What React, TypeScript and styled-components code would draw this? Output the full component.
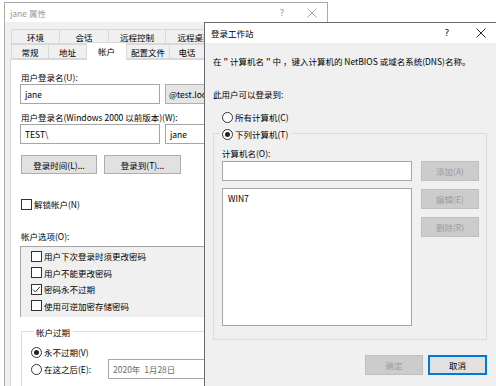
import React from "react";
import styled, { createGlobalStyle } from "styled-components";

const Global = createGlobalStyle`
  html, body { margin: 0; padding: 0; background: #fff; }
  body {
    font-family: "Noto Sans CJK SC", "Noto Sans", sans-serif;
    font-size: 8.5px;
    color: #000;
  }
  * { box-sizing: border-box; }
`;

const Desktop = styled.div`
  position: relative;
  width: 496px;
  height: 386px;
  overflow: hidden;
  background: #fff;
`;

const BackWindow = styled.div`
  position: absolute;
  z-index: 0;
  left: 4px;
  top: 2px;
  width: 324px;
  height: 420px;
  border: 1px solid #aaaaaa;
  background: #f0f0f0;
  display: flex;
  flex-direction: column;
`;

const FrontWindow = styled.div`
  position: absolute;
  z-index: 1;
  left: 204px;
  top: 22px;
  width: 294px;
  height: 380px;
  border: 1px solid #6b6b6b;
  background: #f0f0f0;
  display: flex;
  flex-direction: column;
`;

const TitleBar = styled.div<{ $inactive?: boolean; $pad: number }>`
  height: ${(p) => (p.$inactive ? 19 : 20)}px;
  flex: none;
  background: #fff;
  display: flex;
  align-items: center;
  padding-left: ${(p) => p.$pad}px;
  color: ${(p) => (p.$inactive ? "#9a9a9a" : "#000")};
  line-height: 12px;
`;

const TitleText = styled.span`
  font-size: 8.5px;
`;

const Controls = styled.div`
  margin-left: auto;
  display: flex;
  height: 100%;
`;

const CtrlBtn = styled.div<{ $w: number; $color: string }>`
  width: ${(p) => p.$w}px;
  height: 100%;
  display: flex;
  align-items: center;
  justify-content: center;
  font-family: "DejaVu Sans", sans-serif;
  font-size: 9px;
  color: ${(p) => p.$color};
`;

const CloseGlyph = ({ color }: { color: string }) => (
  <svg width="10" height="10" viewBox="0 0 10 10">
    <path d="M0.5 0.5 L9.5 9.5 M9.5 0.5 L0.5 9.5" stroke={color} strokeWidth="0.9" fill="none" />
  </svg>
);

const BackBody = styled.div`
  flex: 1;
  display: flex;
  flex-direction: column;
  padding: 7px 0 0 5px;
`;

const TabStrip = styled.div`
  display: flex;
  flex-direction: column;
  margin-left: 1px;
`;

const TabRow = styled.div`
  display: flex;
  height: 15px;
  align-items: flex-end;
`;

const Tab = styled.div<{ $w: number; $selected?: boolean }>`
  width: ${(p) => p.$w}px;
  flex: none;
  height: ${(p) => (p.$selected ? 18 : 15)}px;
  margin-bottom: ${(p) => (p.$selected ? -1 : 0)}px;
  border: 1px solid #d9d9d9;
  border-bottom: ${(p) => (p.$selected ? "none" : "1px solid #d9d9d9")};
  margin-left: -1px;
  background: ${(p) => (p.$selected ? "#fff" : "#f0f0f0")};
  position: relative;
  z-index: ${(p) => (p.$selected ? 2 : 0)};
  display: flex;
  align-items: ${(p) => (p.$selected ? "flex-start" : "center")};
  padding-top: ${(p) => (p.$selected ? 2 : 0)}px;
  justify-content: center;
  white-space: nowrap;
  overflow: hidden;
  line-height: 12px;
  &:first-child { margin-left: 0; }
`;

const Panel = styled.div`
  flex: 1;
  background: #fff;
  border: 1px solid #d9d9d9;
  margin-right: 5px;
  padding-left: 9px;
  display: flex;
  flex-direction: column;
  position: relative;
  z-index: 1;
`;

const Label = styled.div<{ $mt: number }>`
  margin-top: ${(p) => p.$mt}px;
  margin-left: 1px;
  line-height: 12px;
  white-space: nowrap;
`;

const FieldRow = styled.div`
  margin-top: 1px;
  display: flex;
  gap: 5px;
  height: 20px;
`;

const TextBox = styled.div<{ $w?: number; $muted?: boolean }>`
  width: ${(p) => (p.$w ? `${p.$w}px` : "auto")};
  flex: ${(p) => (p.$w ? "none" : 1)};
  height: 20px;
  border: 1px solid #a6a6a6;
  background: #fff;
  padding-left: 4px;
  display: flex;
  align-items: center;
  color: ${(p) => (p.$muted ? "#6d6d6d" : "#000")};
  white-space: nowrap;
  overflow: hidden;
`;

const Combo = styled.div`
  flex: 1;
  height: 20px;
  border: 1px solid #adadad;
  background: #e5e5e5;
  padding-left: 3px;
  display: flex;
  align-items: center;
  white-space: nowrap;
  overflow: hidden;
`;

const ButtonRow = styled.div`
  margin-top: 11px;
  margin-left: 1px;
  display: flex;
  gap: 7px;
`;

const Button = styled.div<{ $w: number; $h?: number; $disabled?: boolean; $default?: boolean }>`
  width: ${(p) => p.$w}px;
  height: ${(p) => p.$h ?? 19}px;
  flex: none;
  border: 1px solid
    ${(p) => (p.$default ? "#0078d7" : p.$disabled ? "#bfbfbf" : "#adadad")};
  box-shadow: ${(p) => (p.$default ? "inset 0 0 0 1px #0078d7" : "none")};
  background: ${(p) => (p.$disabled ? "#cccccc" : "#e1e1e1")};
  color: ${(p) => (p.$disabled ? "#9c9c9c" : "#000")};
  display: flex;
  align-items: center;
  justify-content: center;
  white-space: nowrap;
  line-height: 12px;
`;

const CheckRow = styled.div<{ $mt?: number; $pl?: number; $h?: number; $ml?: number }>`
  margin-top: ${(p) => p.$mt ?? 0}px;
  margin-left: ${(p) => p.$ml ?? 1}px;
  padding-left: ${(p) => p.$pl ?? 0}px;
  height: ${(p) => p.$h ?? 14}px;
  display: flex;
  align-items: center;
  white-space: nowrap;
  flex: none;
`;

const Box = styled.div`
  width: 11px;
  height: 11px;
  border: 1px solid #333;
  background: #fff;
  flex: none;
  display: flex;
  align-items: center;
  justify-content: center;
  margin-right: 2px;
`;

const Circle = styled.div`
  width: 11px;
  height: 11px;
  border: 1px solid #333;
  border-radius: 50%;
  background: #fff;
  flex: none;
  display: flex;
  align-items: center;
  justify-content: center;
  margin-right: 2px;
`;

const Dot = styled.div`
  width: 5px;
  height: 5px;
  border-radius: 50%;
  background: #222;
`;

const CheckBox = ({ checked }: { checked?: boolean }) => (
  <Box>
    {checked && (
      <svg width="9" height="9" viewBox="0 0 9 9">
        <polyline points="1,4.6 3.4,7 8,1.8" fill="none" stroke="#333" strokeWidth="1" />
      </svg>
    )}
  </Box>
);

const Radio = ({ checked }: { checked?: boolean }) => <Circle>{checked && <Dot />}</Circle>;

const OptionList = styled.div`
  margin-top: 4px;
  height: 71px;
  overflow: hidden;
  border: 1px solid #a6a6a6;
  border-bottom: none;
  background: #f0f0f0;
  padding-top: 1px;
`;

const OptionItem = styled.div`
  height: 16.5px;
  padding-left: 10px;
  display: flex;
  align-items: center;
  white-space: nowrap;
`;

const Group = styled.div<{ $h: number; $pl: number; $mt: number; $ml?: number }>`
  margin-top: ${(p) => p.$mt}px;
  margin-left: ${(p) => p.$ml ?? 0}px;
  height: ${(p) => p.$h}px;
  border: 1px solid #dcdcdc;
  padding-left: ${(p) => p.$pl}px;
  display: flex;
  flex-direction: column;
  flex: none;
`;

const Caption = styled.div<{ $bg: string; $ml: number }>`
  align-self: flex-start;
  margin-top: -7px;
  margin-left: ${(p) => p.$ml}px;
  padding: 0 3px 0 2px;
  background: ${(p) => p.$bg};
  height: 14px;
  display: flex;
  align-items: center;
  line-height: 12px;
  white-space: nowrap;
`;

const RadioLabel = styled.span<{ $w?: number }>`
  display: inline-block;
  width: ${(p) => (p.$w ? `${p.$w}px` : "auto")};
  line-height: 12px;
`;

const DlgBody = styled.div`
  flex: 1;
  display: flex;
  flex-direction: column;
  padding: 0 10px 0 8px;
`;

const Text = styled.div<{ $mt: number; $ml?: number }>`
  margin-top: ${(p) => p.$mt}px;
  margin-left: ${(p) => p.$ml ?? 0}px;
  line-height: 12px;
  white-space: nowrap;
`;

const EditGrid = styled.div`
  margin-top: 2px;
  display: grid;
  grid-template-columns: 190px 58px;
  column-gap: 9px;
`;

const LeftCol = styled.div`
  display: flex;
  flex-direction: column;
`;

const RightCol = styled.div`
  display: flex;
  flex-direction: column;
  gap: 8px;
`;

const ListArea = styled.div`
  margin-top: 7px;
  height: 138px;
  border: 1px solid #a6a6a6;
  background: #fff;
  padding: 3px 0 0 5px;
  line-height: 12px;
`;

const Footer = styled.div`
  margin-top: 15px;
  display: flex;
  justify-content: flex-end;
  gap: 5px;
`;

export default function App() {
  return (
    <>
      <Global />
      <Desktop>
        <BackWindow>
          <TitleBar $inactive $pad={5}>
            <TitleText>jane 属性</TitleText>
            <Controls>
              <CtrlBtn $w={30} $color="#9a9a9a">?</CtrlBtn>
              <CtrlBtn $w={30} $color="#9a9a9a">
                <CloseGlyph color="#9a9a9a" />
              </CtrlBtn>
            </Controls>
          </TitleBar>
          <BackBody>
            <TabStrip>
              <TabRow>
                <Tab $w={49}>环境</Tab>
                <Tab $w={50}>会话</Tab>
                <Tab $w={58}>远程控制</Tab>
                <Tab $w={110}>远程桌面服务配置文件</Tab>
              </TabRow>
              <TabRow>
                <Tab $w={38}>常规</Tab>
                <Tab $w={39}>地址</Tab>
                <Tab $w={41} $selected>帐户</Tab>
                <Tab $w={44}>配置文件</Tab>
                <Tab $w={36}>电话</Tab>
                <Tab $w={50}>组织</Tab>
              </TabRow>
            </TabStrip>
            <Panel>
              <Label $mt={11}>用户登录名(U):</Label>
              <FieldRow>
                <TextBox $w={140}>jane</TextBox>
                <Combo>@test.local</Combo>
              </FieldRow>
              <Label $mt={7}>用户登录名(Windows 2000 以前版本)(W):</Label>
              <FieldRow>
                <TextBox $w={140}>TEST\</TextBox>
                <TextBox>jane</TextBox>
              </FieldRow>
              <ButtonRow>
                <Button $w={76}>登录时间(L)...</Button>
                <Button $w={77}>登录到(T)...</Button>
              </ButtonRow>
              <CheckRow $mt={23}>
                <CheckBox />
                解锁帐户(N)
              </CheckRow>
              <Label $mt={19}>帐户选项(O):</Label>
              <OptionList>
                <OptionItem>
                  <CheckBox />
                  用户下次登录时须更改密码
                </OptionItem>
                <OptionItem>
                  <CheckBox />
                  用户不能更改密码
                </OptionItem>
                <OptionItem>
                  <CheckBox checked />
                  密码永不过期
                </OptionItem>
                <OptionItem>
                  <CheckBox />
                  使用可逆加密存储密码
                </OptionItem>
                <OptionItem>
                  <CheckBox />
                  以大写模式存储密码
                </OptionItem>
              </OptionList>
              <Group $h={80} $pl={9} $mt={14} $ml={1}>
                <Caption $bg="#fff" $ml={3}>帐户过期</Caption>
                <CheckRow $mt={6} $ml={0}>
                  <Radio checked />
                  <RadioLabel>永不过期(V)</RadioLabel>
                </CheckRow>
                <CheckRow $h={20} $ml={0}>
                  <Radio />
                  <RadioLabel $w={64}>在这之后(E):</RadioLabel>
                  <TextBox $w={120} $muted>2020年&nbsp;&nbsp;1月28日</TextBox>
                </CheckRow>
              </Group>
            </Panel>
          </BackBody>
        </BackWindow>

        <FrontWindow>
          <TitleBar $pad={6}>
            <TitleText>登录工作站</TitleText>
            <Controls>
              <CtrlBtn $w={36} $color="#111">?</CtrlBtn>
              <CtrlBtn $w={32} $color="#111">
                <CloseGlyph color="#111" />
              </CtrlBtn>
            </Controls>
          </TitleBar>
          <DlgBody>
            <Text $mt={12}>在＂计算机名＂中 ，键入计算机的 NetBIOS 或域名系统(DNS)名称。</Text>
            <Text $mt={21}>此用户可以登录到:</Text>
            <CheckRow $mt={10} $pl={8}>
              <Radio />
              所有计算机(C)
            </CheckRow>
            <Group $h={207} $pl={8} $mt={9}>
              <Caption $bg="#f0f0f0" $ml={-2}>
                <Radio checked />
                下列计算机(T)
              </Caption>
              <Text $mt={6}>计算机名(O):</Text>
              <EditGrid>
                <LeftCol>
                  <TextBox $w={190} />
                  <ListArea>WIN7</ListArea>
                </LeftCol>
                <RightCol>
                  <Button $w={58} $h={20} $disabled>添加(A)</Button>
                  <Button $w={58} $h={20} $disabled>编辑(E)</Button>
                  <Button $w={58} $h={20} $disabled>删除(R)</Button>
                </RightCol>
              </EditGrid>
            </Group>
            <Footer>
              <Button $w={58} $h={20} $disabled>确定</Button>
              <Button $w={59} $h={20} $default>取消</Button>
            </Footer>
          </DlgBody>
        </FrontWindow>
      </Desktop>
    </>
  );
}
